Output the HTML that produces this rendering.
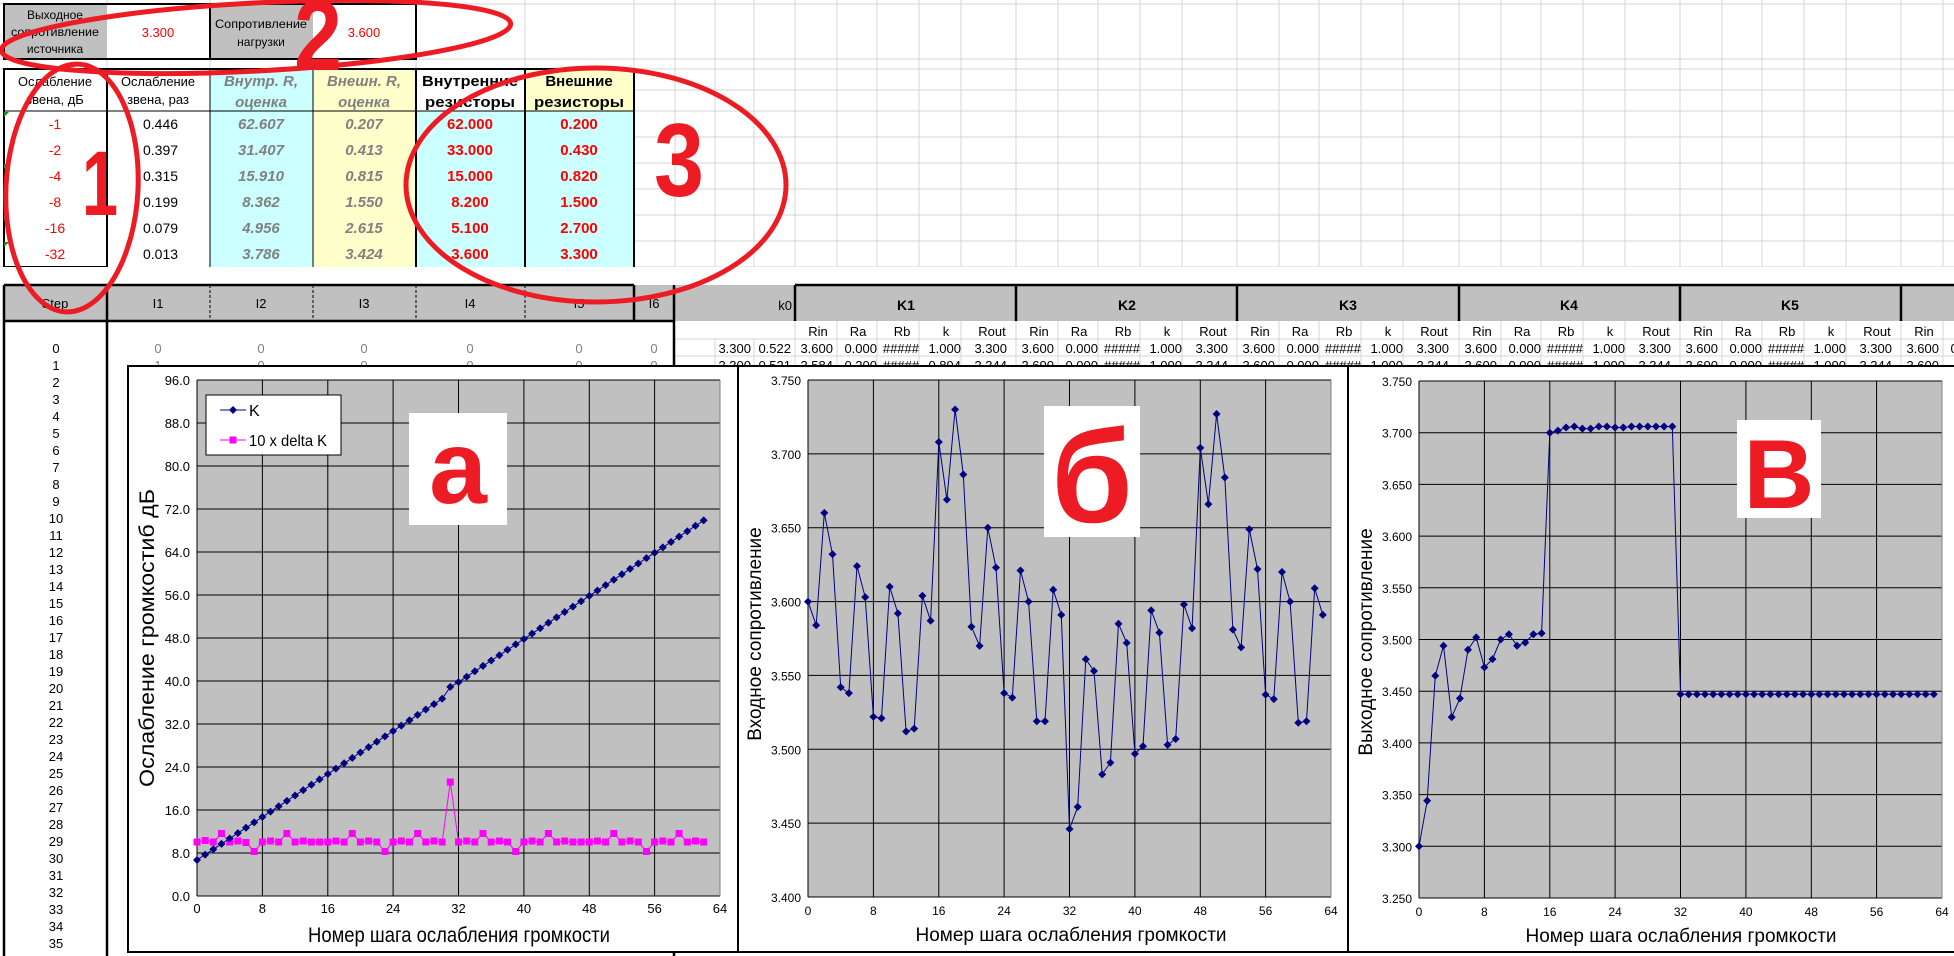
<!DOCTYPE html>
<html><head><meta charset="utf-8">
<style>
html,body{margin:0;padding:0;background:#fff;}
svg{display:block;}
text{font-family:"Liberation Sans Narrow","Liberation Sans","DejaVu Sans",sans-serif;}
.s{font-size:13px;}
.w{font-family:"Liberation Sans","DejaVu Sans",sans-serif;}
</style></head><body>
<svg width="1954" height="956" viewBox="0 0 1954 956" xmlns="http://www.w3.org/2000/svg">
<defs>
<marker id="dm" markerWidth="9" markerHeight="9" refX="4.5" refY="4.5" markerUnits="userSpaceOnUse"><path d="M4.5 0.5L8.5 4.5L4.5 8.5L0.5 4.5Z" fill="#000080"/></marker>
<marker id="sq" markerWidth="9" markerHeight="9" refX="4.5" refY="4.5" markerUnits="userSpaceOnUse"><rect x="1" y="1" width="7" height="7" fill="#FF00FF"/></marker>
</defs>

<g stroke="#d4d4d4" stroke-width="1">
<line x1="0" y1="4" x2="1954" y2="4"/><line x1="0" y1="59" x2="1954" y2="59"/><line x1="0" y1="69" x2="1954" y2="69"/>
<line x1="634" y1="90" x2="1954" y2="90"/><line x1="634" y1="111" x2="1954" y2="111"/><line x1="634" y1="137" x2="1954" y2="137"/>
<line x1="634" y1="163" x2="1954" y2="163"/><line x1="634" y1="189" x2="1954" y2="189"/><line x1="634" y1="215" x2="1954" y2="215"/>
<line x1="634" y1="241" x2="1954" y2="241"/><line x1="0" y1="267" x2="1954" y2="267"/>
<line x1="107" y1="0" x2="107" y2="285"/><line x1="210" y1="0" x2="210" y2="285"/><line x1="313" y1="0" x2="313" y2="285"/>
<line x1="416" y1="0" x2="416" y2="285"/><line x1="525" y1="0" x2="525" y2="285"/><line x1="634" y1="0" x2="634" y2="285"/>
<line x1="675" y1="0" x2="675" y2="285"/><line x1="715" y1="0" x2="715" y2="285"/><line x1="754" y1="0" x2="754" y2="285"/>
</g>
<g stroke="#d4d4d4" stroke-width="1">
<line x1="795" y1="0" x2="795" y2="285"/><line x1="837" y1="0" x2="837" y2="285"/><line x1="877" y1="0" x2="877" y2="285"/><line x1="919" y1="0" x2="919" y2="285"/><line x1="961" y1="0" x2="961" y2="285"/>
<line x1="1016" y1="0" x2="1016" y2="285"/><line x1="1058" y1="0" x2="1058" y2="285"/><line x1="1098" y1="0" x2="1098" y2="285"/><line x1="1140" y1="0" x2="1140" y2="285"/><line x1="1182" y1="0" x2="1182" y2="285"/>
<line x1="1237" y1="0" x2="1237" y2="285"/><line x1="1279" y1="0" x2="1279" y2="285"/><line x1="1319" y1="0" x2="1319" y2="285"/><line x1="1361" y1="0" x2="1361" y2="285"/><line x1="1403" y1="0" x2="1403" y2="285"/>
<line x1="1459" y1="0" x2="1459" y2="285"/><line x1="1501" y1="0" x2="1501" y2="285"/><line x1="1541" y1="0" x2="1541" y2="285"/><line x1="1583" y1="0" x2="1583" y2="285"/><line x1="1625" y1="0" x2="1625" y2="285"/>
<line x1="1680" y1="0" x2="1680" y2="285"/><line x1="1722" y1="0" x2="1722" y2="285"/><line x1="1762" y1="0" x2="1762" y2="285"/><line x1="1804" y1="0" x2="1804" y2="285"/><line x1="1846" y1="0" x2="1846" y2="285"/>
<line x1="1901" y1="0" x2="1901" y2="285"/><line x1="1943" y1="0" x2="1943" y2="285"/>
</g>

<rect x="4" y="4" width="103" height="55" fill="#C0C0C0"/>
<rect x="107" y="4" width="103" height="55" fill="#fff"/>
<rect x="210" y="4" width="103" height="55" fill="#C0C0C0"/>
<rect x="313" y="4" width="103" height="55" fill="#fff"/>
<g fill="none" stroke="#000" stroke-width="2"><rect x="4" y="4" width="412" height="55"/><line x1="210" y1="4" x2="210" y2="59"/></g>
<g class="s" text-anchor="middle" font-size="12">
<text x="55" y="19" font-size="12">Выходное</text><text x="55" y="36" font-size="12" textLength="88" lengthAdjust="spacingAndGlyphs">сопротивление</text><text x="55" y="53" font-size="12">источника</text>
<text x="261" y="28" font-size="12" textLength="92" lengthAdjust="spacingAndGlyphs">Сопротивление</text><text x="261" y="46" font-size="12">нагрузки</text>
<text x="158" y="37" fill="#ff0000" font-size="13">3.300</text><text x="364" y="37" fill="#ff0000" font-size="13">3.600</text>
</g>

<rect x="4" y="69" width="630" height="198" fill="#fff"/>
<rect x="210" y="69" width="103" height="198" fill="#CCFFFF"/>
<rect x="313" y="69" width="103" height="198" fill="#FFFFCC"/>
<rect x="416" y="111" width="218" height="156" fill="#CCFFFF"/>
<rect x="525" y="69" width="109" height="42" fill="#FFFFCC"/>
<g stroke="#000" stroke-width="1" fill="none">
<line x1="4" y1="111" x2="634" y2="111"/>
<line x1="210" y1="69" x2="210" y2="267"/><line x1="313" y1="69" x2="313" y2="267"/>
</g>
<g stroke="#000" stroke-width="2" fill="none">
<line x1="4" y1="69" x2="634" y2="69"/>
<rect x="4" y="69" width="103" height="198"/>
<line x1="416" y1="69" x2="416" y2="267"/><line x1="525" y1="69" x2="525" y2="267"/><line x1="634" y1="69" x2="634" y2="267"/>
</g>
<g fill="#1a8a1a"><path d="M4 112l5 0l-5 5z"/><path d="M4 164l5 0l-5 5z"/><path d="M4 190l5 0l-5 5z"/><path d="M4 216l5 0l-5 5z"/><path d="M4 242l5 0l-5 5z"/></g>
<g class="s" text-anchor="middle" font-size="13">
<text x="55" y="86" textLength="74" lengthAdjust="spacingAndGlyphs">Ослабление</text><text x="55" y="104">звена, дБ</text>
<text x="158" y="86" textLength="74" lengthAdjust="spacingAndGlyphs">Ослабление</text><text x="158" y="104">звена, раз</text>
</g>
<g text-anchor="middle" font-size="15" font-weight="bold" font-style="italic" fill="#808080">
<text x="261" y="86">Внутр. R,</text><text x="261" y="107">оценка</text>
<text x="364" y="86">Внешн. R,</text><text x="364" y="107">оценка</text>
</g>
<g text-anchor="middle" font-size="15" font-weight="bold" fill="#000">
<text x="470" y="86" textLength="96" lengthAdjust="spacingAndGlyphs">Внутренние</text><text x="470" y="107" textLength="90" lengthAdjust="spacingAndGlyphs">резисторы</text>
<text x="579" y="86">Внешние</text><text x="579" y="107" textLength="90" lengthAdjust="spacingAndGlyphs">резисторы</text>
</g>
<g text-anchor="middle" font-size="14">
<g fill="#ff0000"><text x="55" y="129">-1</text><text x="55" y="155">-2</text><text x="55" y="181">-4</text><text x="55" y="207">-8</text><text x="55" y="233">-16</text><text x="55" y="259">-32</text></g>
<g fill="#000" text-anchor="start"><text x="143" y="129">0.446</text><text x="143" y="155">0.397</text><text x="143" y="181">0.315</text><text x="143" y="207">0.199</text><text x="143" y="233">0.079</text><text x="143" y="259">0.013</text></g>
<g fill="#808080" font-weight="bold" font-style="italic" font-size="15"><text x="261" y="129">62.607</text><text x="261" y="155">31.407</text><text x="261" y="181">15.910</text><text x="261" y="207">8.362</text><text x="261" y="233">4.956</text><text x="261" y="259">3.786</text>
<text x="364" y="129">0.207</text><text x="364" y="155">0.413</text><text x="364" y="181">0.815</text><text x="364" y="207">1.550</text><text x="364" y="233">2.615</text><text x="364" y="259">3.424</text></g>
<g fill="#ff0000" font-weight="bold" font-size="15"><text x="470" y="129">62.000</text><text x="470" y="155">33.000</text><text x="470" y="181">15.000</text><text x="470" y="207">8.200</text><text x="470" y="233">5.100</text><text x="470" y="259">3.600</text>
<text x="579" y="129">0.200</text><text x="579" y="155">0.430</text><text x="579" y="181">0.820</text><text x="579" y="207">1.500</text><text x="579" y="233">2.700</text><text x="579" y="259">3.300</text></g>
</g>

<rect x="0" y="267" width="1954" height="18" fill="#fff"/>
<rect x="4" y="285" width="1950" height="36" fill="#C0C0C0"/>
<rect x="0" y="321" width="1954" height="635" fill="#fff"/>
<g stroke="#d4d4d4"><line x1="675" y1="339" x2="1954" y2="339"/><line x1="675" y1="356" x2="1954" y2="356"/>
<line x1="715" y1="339" x2="715" y2="366"/><line x1="754" y1="339" x2="754" y2="366"/>
<line x1="837" y1="321" x2="837" y2="366"/><line x1="877" y1="321" x2="877" y2="366"/><line x1="919" y1="321" x2="919" y2="366"/><line x1="961" y1="321" x2="961" y2="366"/><line x1="1016" y1="321" x2="1016" y2="366"/>
<line x1="1058" y1="321" x2="1058" y2="366"/><line x1="1098" y1="321" x2="1098" y2="366"/><line x1="1140" y1="321" x2="1140" y2="366"/><line x1="1182" y1="321" x2="1182" y2="366"/><line x1="1237" y1="321" x2="1237" y2="366"/>
<line x1="1279" y1="321" x2="1279" y2="366"/><line x1="1319" y1="321" x2="1319" y2="366"/><line x1="1361" y1="321" x2="1361" y2="366"/><line x1="1403" y1="321" x2="1403" y2="366"/><line x1="1459" y1="321" x2="1459" y2="366"/>
<line x1="1501" y1="321" x2="1501" y2="366"/><line x1="1541" y1="321" x2="1541" y2="366"/><line x1="1583" y1="321" x2="1583" y2="366"/><line x1="1625" y1="321" x2="1625" y2="366"/><line x1="1680" y1="321" x2="1680" y2="366"/>
<line x1="1722" y1="321" x2="1722" y2="366"/><line x1="1762" y1="321" x2="1762" y2="366"/><line x1="1804" y1="321" x2="1804" y2="366"/><line x1="1846" y1="321" x2="1846" y2="366"/><line x1="1901" y1="321" x2="1901" y2="366"/><line x1="1943" y1="321" x2="1943" y2="366"/>
<line x1="795" y1="321" x2="795" y2="366"/></g>
<g stroke="#000" stroke-width="1" stroke-dasharray="3,2"><line x1="210" y1="285" x2="210" y2="321"/><line x1="313" y1="285" x2="313" y2="321"/><line x1="416" y1="285" x2="416" y2="321"/><line x1="525" y1="285" x2="525" y2="321"/></g>
<g stroke="#000" stroke-width="2.5">
<line x1="4" y1="285" x2="634" y2="285"/><line x1="795" y1="285" x2="1954" y2="285"/>
<line x1="4" y1="321" x2="674" y2="321"/>
<line x1="4" y1="285" x2="4" y2="956"/><line x1="107" y1="285" x2="107" y2="956"/><line x1="634" y1="285" x2="634" y2="321"/><line x1="674" y1="285" x2="674" y2="956"/>
<line x1="795" y1="285" x2="795" y2="321"/><line x1="1016" y1="285" x2="1016" y2="321"/><line x1="1237" y1="285" x2="1237" y2="321"/><line x1="1459" y1="285" x2="1459" y2="321"/><line x1="1680" y1="285" x2="1680" y2="321"/><line x1="1901" y1="285" x2="1901" y2="321"/>
</g>
<g class="s" text-anchor="middle" font-size="14">
<text x="55" y="308">Step</text><text x="158" y="308">I1</text><text x="261" y="308">I2</text><text x="364" y="308">I3</text><text x="470" y="308">I4</text><text x="579" y="308">I5</text><text x="654" y="308">I6</text>
</g>
<g font-size="14" font-weight="bold" text-anchor="middle">
<text x="906" y="310">K1</text><text x="1127" y="310">K2</text><text x="1348" y="310">K3</text><text x="1569" y="310">K4</text><text x="1790" y="310">K5</text>
</g>
<text x="792" y="310" text-anchor="end" font-size="13">k0</text>
<g class="s" text-anchor="middle" font-size="13">
<text x="818" y="336">Rin</text><text x="858" y="336">Ra</text><text x="902" y="336">Rb</text><text x="946" y="336">k</text><text x="992" y="336">Rout</text>
<text x="1039" y="336">Rin</text><text x="1079" y="336">Ra</text><text x="1123" y="336">Rb</text><text x="1167" y="336">k</text><text x="1213" y="336">Rout</text>
<text x="1260" y="336">Rin</text><text x="1300" y="336">Ra</text><text x="1344" y="336">Rb</text><text x="1388" y="336">k</text><text x="1434" y="336">Rout</text>
<text x="1482" y="336">Rin</text><text x="1522" y="336">Ra</text><text x="1566" y="336">Rb</text><text x="1610" y="336">k</text><text x="1656" y="336">Rout</text>
<text x="1703" y="336">Rin</text><text x="1743" y="336">Ra</text><text x="1787" y="336">Rb</text><text x="1831" y="336">k</text><text x="1877" y="336">Rout</text>
<text x="1924" y="336">Rin</text>
</g>
<g class="s" text-anchor="end" font-size="13">
<text x="751" y="353">3.300</text><text x="791" y="353">0.522</text>
<text x="833" y="353">3.600</text><text x="877" y="353">0.000</text><text x="919" y="353">#####</text><text x="961" y="353">1.000</text><text x="1007" y="353">3.300</text>
<text x="1054" y="353">3.600</text><text x="1098" y="353">0.000</text><text x="1140" y="353">#####</text><text x="1182" y="353">1.000</text><text x="1228" y="353">3.300</text>
<text x="1275" y="353">3.600</text><text x="1319" y="353">0.000</text><text x="1361" y="353">#####</text><text x="1403" y="353">1.000</text><text x="1449" y="353">3.300</text>
<text x="1497" y="353">3.600</text><text x="1541" y="353">0.000</text><text x="1583" y="353">#####</text><text x="1625" y="353">1.000</text><text x="1671" y="353">3.300</text>
<text x="1718" y="353">3.600</text><text x="1762" y="353">0.000</text><text x="1804" y="353">#####</text><text x="1846" y="353">1.000</text><text x="1892" y="353">3.300</text>
<text x="1939" y="353">3.600</text><text x="1983" y="353">0.000</text>
<text x="751" y="370">3.300</text><text x="791" y="370">0.521</text>
<text x="833" y="370">3.584</text><text x="877" y="370">0.200</text><text x="919" y="370">#####</text><text x="961" y="370">0.894</text><text x="1007" y="370">3.344</text>
<text x="1054" y="370">3.600</text><text x="1098" y="370">0.000</text><text x="1140" y="370">#####</text><text x="1182" y="370">1.000</text><text x="1228" y="370">3.344</text>
<text x="1275" y="370">3.600</text><text x="1319" y="370">0.000</text><text x="1361" y="370">#####</text><text x="1403" y="370">1.000</text><text x="1449" y="370">3.344</text>
<text x="1497" y="370">3.600</text><text x="1541" y="370">0.000</text><text x="1583" y="370">#####</text><text x="1625" y="370">1.000</text><text x="1671" y="370">3.344</text>
<text x="1718" y="370">3.600</text><text x="1762" y="370">0.000</text><text x="1804" y="370">#####</text><text x="1846" y="370">1.000</text><text x="1892" y="370">3.344</text>
<text x="1939" y="370">3.600</text>
</g>
<g class="s" text-anchor="middle" font-size="14" fill="#808080">
<text x="158" y="353">0</text><text x="261" y="353">0</text><text x="364" y="353">0</text><text x="470" y="353">0</text><text x="579" y="353">0</text><text x="654" y="353">0</text>
<text x="158" y="370">1</text><text x="261" y="370">0</text><text x="364" y="370">0</text><text x="470" y="370">0</text><text x="579" y="370">0</text><text x="654" y="370">0</text>
</g>
<g class="s" text-anchor="middle" font-size="14">
<text x="56" y="353">0</text><text x="56" y="370">1</text><text x="56" y="387">2</text><text x="56" y="404">3</text><text x="56" y="421">4</text><text x="56" y="438">5</text><text x="56" y="455">6</text><text x="56" y="472">7</text><text x="56" y="489">8</text><text x="56" y="506">9</text>
<text x="56" y="523">10</text><text x="56" y="540">11</text><text x="56" y="557">12</text><text x="56" y="574">13</text><text x="56" y="591">14</text><text x="56" y="608">15</text><text x="56" y="625">16</text><text x="56" y="642">17</text><text x="56" y="659">18</text><text x="56" y="676">19</text>
<text x="56" y="693">20</text><text x="56" y="710">21</text><text x="56" y="727">22</text><text x="56" y="744">23</text><text x="56" y="761">24</text><text x="56" y="778">25</text><text x="56" y="795">26</text><text x="56" y="812">27</text><text x="56" y="829">28</text><text x="56" y="846">29</text>
<text x="56" y="863">30</text><text x="56" y="880">31</text><text x="56" y="897">32</text><text x="56" y="914">33</text><text x="56" y="931">34</text><text x="56" y="948">35</text>
</g>

<!-- Chart a -->
<rect x="128" y="366" width="610" height="586" fill="#fff" stroke="#000" stroke-width="2"/>
<rect x="197" y="380" width="523" height="516" fill="#C0C0C0"/>
<g stroke="#000" stroke-width="1">
<line x1="197" y1="380" x2="720" y2="380"/><line x1="197" y1="423" x2="720" y2="423"/><line x1="197" y1="466" x2="720" y2="466"/><line x1="197" y1="509" x2="720" y2="509"/><line x1="197" y1="552" x2="720" y2="552"/><line x1="197" y1="595" x2="720" y2="595"/><line x1="197" y1="638" x2="720" y2="638"/><line x1="197" y1="681" x2="720" y2="681"/><line x1="197" y1="724" x2="720" y2="724"/><line x1="197" y1="767" x2="720" y2="767"/><line x1="197" y1="810" x2="720" y2="810"/><line x1="197" y1="853" x2="720" y2="853"/>
<line x1="262.4" y1="380" x2="262.4" y2="896"/><line x1="327.8" y1="380" x2="327.8" y2="896"/><line x1="393.1" y1="380" x2="393.1" y2="896"/><line x1="458.5" y1="380" x2="458.5" y2="896"/><line x1="523.9" y1="380" x2="523.9" y2="896"/><line x1="589.3" y1="380" x2="589.3" y2="896"/><line x1="654.6" y1="380" x2="654.6" y2="896"/>
<line x1="197" y1="380" x2="197" y2="896"/><line x1="197" y1="896" x2="720" y2="896"/>
</g>
<g stroke="#808080"><line x1="720" y1="380" x2="720" y2="896"/></g>
<g class="s" text-anchor="end" font-size="13">
<text x="190" y="385">96.0</text><text x="190" y="428">88.0</text><text x="190" y="471">80.0</text><text x="190" y="514">72.0</text><text x="190" y="557">64.0</text><text x="190" y="600">56.0</text><text x="190" y="643">48.0</text><text x="190" y="686">40.0</text><text x="190" y="729">32.0</text><text x="190" y="772">24.0</text><text x="190" y="815">16.0</text><text x="190" y="858">8.0</text><text x="190" y="901">0.0</text>
</g>
<g class="s" text-anchor="middle" font-size="13">
<text x="197" y="913">0</text><text x="262.4" y="913">8</text><text x="327.8" y="913">16</text><text x="393.1" y="913">24</text><text x="458.5" y="913">32</text><text x="523.9" y="913">40</text><text x="589.3" y="913">48</text><text x="654.6" y="913">56</text><text x="720" y="913">64</text>
</g>
<text x="459" y="942" text-anchor="middle" font-size="21" textLength="302" lengthAdjust="spacingAndGlyphs">Номер шага ослабления громкости</text>
<text class="w" transform="translate(154,638) rotate(-90)" text-anchor="middle" font-size="21" textLength="298" lengthAdjust="spacingAndGlyphs">Ослабление громкостиб  дБ</text>
<polyline fill="none" stroke="#FF00FF" stroke-width="1" marker-start="url(#sq)" marker-mid="url(#sq)" marker-end="url(#sq)" points="197,842 205.2,840.5 213.3,842 221.5,833.5 229.7,842 237.9,841 246,842.5 254.2,851.5 262.4,842 270.5,841 278.7,842 286.9,833.5 295.1,842 303.2,841 311.4,842 319.6,842 327.8,842 335.9,841 344.1,842 352.3,833.5 360.4,842 368.6,841 376.8,842 385,851.5 393.1,842 401.3,841 409.5,842 417.6,833.5 425.8,842 434,841 442.2,842 450.3,782 458.5,842 466.7,841 474.8,842 483,833.5 491.2,842 499.4,841 507.5,842 515.7,851.5 523.9,842 532.1,841 540.2,842 548.4,833.5 556.6,842 564.7,841 572.9,842 581.1,842 589.3,842 597.4,841 605.6,842 613.8,833.5 621.9,842 630.1,841 638.3,842 646.5,851.5 654.6,842 662.8,841 671,842 679.1,833.5 687.3,842 695.5,841 703.7,842"/>
<polyline fill="none" stroke="#000080" stroke-width="1" marker-start="url(#dm)" marker-mid="url(#dm)" marker-end="url(#dm)" points="197,860 205.2,854.6 213.3,849.3 221.5,843.9 229.7,838.5 237.9,833.1 246,827.8 254.2,822.4 262.4,817 270.5,811.6 278.7,806.3 286.9,800.9 295.1,795.5 303.2,790.1 311.4,784.8 319.6,779.4 327.8,774 335.9,768.6 344.1,763.3 352.3,757.9 360.4,752.5 368.6,747.1 376.8,741.8 385,736.4 393.1,731 401.3,725.6 409.5,720.3 417.6,714.9 425.8,709.5 434,704.1 442.2,698.8 450.3,686.9 458.5,682.1 466.7,676.7 474.8,671.3 483,665.9 491.2,660.5 499.4,655.2 507.5,649.8 515.7,644.4 523.9,639 532.1,633.6 540.2,628.2 548.4,622.8 556.6,617.4 564.7,612 572.9,606.6 581.1,601.3 589.3,595.9 597.4,590.5 605.6,585.1 613.8,579.7 621.9,574.3 630.1,568.9 638.3,563.5 646.5,558.1 654.6,552.7 662.8,547.4 671,542 679.1,536.6 687.3,531.2 695.5,525.8 703.7,520.4"/>
<rect x="206" y="395" width="135" height="60" fill="#fff" stroke="#000" stroke-width="1"/>
<line x1="220" y1="410" x2="246" y2="410" stroke="#000080"/><path d="M233 406L237 410L233 414L229 410Z" fill="#000080"/>
<line x1="220" y1="440" x2="246" y2="440" stroke="#FF00FF"/><rect x="229.5" y="436.5" width="7" height="7" fill="#FF00FF"/>
<text x="249" y="416" font-size="16">K</text><text x="249" y="446" font-size="16" textLength="78" lengthAdjust="spacingAndGlyphs">10 x delta K</text>
<rect x="409" y="413" width="98" height="112" fill="#fff"/>
<text class="w" x="458" y="503" text-anchor="middle" font-size="104" font-weight="bold" fill="#ED1C24">а</text>

<!-- Chart б -->
<rect x="738" y="366" width="610" height="586" fill="#fff" stroke="#000" stroke-width="2"/>
<rect x="808" y="380" width="523" height="517" fill="#C0C0C0"/>
<g stroke="#000" stroke-width="1">
<line x1="808" y1="380" x2="1331" y2="380"/><line x1="808" y1="453.9" x2="1331" y2="453.9"/><line x1="808" y1="527.7" x2="1331" y2="527.7"/><line x1="808" y1="601.6" x2="1331" y2="601.6"/><line x1="808" y1="675.4" x2="1331" y2="675.4"/><line x1="808" y1="749.3" x2="1331" y2="749.3"/><line x1="808" y1="823.1" x2="1331" y2="823.1"/><line x1="808" y1="897" x2="1331" y2="897"/>
<line x1="873.4" y1="380" x2="873.4" y2="897"/><line x1="938.8" y1="380" x2="938.8" y2="897"/><line x1="1004.1" y1="380" x2="1004.1" y2="897"/><line x1="1069.5" y1="380" x2="1069.5" y2="897"/><line x1="1134.9" y1="380" x2="1134.9" y2="897"/><line x1="1200.3" y1="380" x2="1200.3" y2="897"/><line x1="1265.6" y1="380" x2="1265.6" y2="897"/>
<line x1="808" y1="380" x2="808" y2="897"/>
</g>
<g stroke="#808080"><line x1="1331" y1="380" x2="1331" y2="897"/></g>
<g class="w" text-anchor="end" font-size="12">
<text x="801" y="385">3.750</text><text x="801" y="458.9">3.700</text><text x="801" y="532.7">3.650</text><text x="801" y="606.6">3.600</text><text x="801" y="680.4">3.550</text><text x="801" y="754.3">3.500</text><text x="801" y="828.1">3.450</text><text x="801" y="902">3.400</text>
</g>
<g class="w" text-anchor="middle" font-size="12">
<text x="808" y="915">0</text><text x="873.4" y="915">8</text><text x="938.8" y="915">16</text><text x="1004.1" y="915">24</text><text x="1069.5" y="915">32</text><text x="1134.9" y="915">40</text><text x="1200.3" y="915">48</text><text x="1265.6" y="915">56</text><text x="1331" y="915">64</text>
</g>
<text class="w" x="1071" y="941" text-anchor="middle" font-size="19">Номер шага ослабления громкости</text>
<text class="w" transform="translate(761,634) rotate(-90)" text-anchor="middle" font-size="19">Входное сопротивление</text>
<polyline fill="none" stroke="#000080" stroke-width="1" stroke-linejoin="round" marker-start="url(#dm)" marker-mid="url(#dm)" marker-end="url(#dm)" points="808,601.6 816.2,625.2 824.3,512.9 832.5,554.3 840.7,687.2 848.9,693.1 857,566.1 865.2,597.1 873.4,716.8 881.5,718.3 889.7,586.8 897.9,613.4 906.1,731.5 914.2,728.6 922.4,595.7 930.6,620.8 938.8,442 946.9,499.6 955.1,409.5 963.3,474.5 971.4,626.7 979.6,645.9 987.8,527.7 996,567.6 1004.1,693.1 1012.3,697.6 1020.5,570.5 1028.6,601.6 1036.8,721.2 1045,721.2 1053.2,589.7 1061.3,614.9 1069.5,829 1077.7,806.9 1085.8,659.2 1094,671 1102.2,774.4 1110.4,762.6 1118.5,623.7 1126.7,642.9 1134.9,753.7 1143,746.3 1151.2,610.4 1159.4,632.6 1167.6,744.9 1175.7,739 1183.9,604.5 1192.1,628.2 1200.3,447.9 1208.4,504.1 1216.6,414 1224.8,477.5 1232.9,629.6 1241.1,647.4 1249.3,529.2 1257.5,569.1 1265.6,694.6 1273.8,699.1 1282,572 1290.1,601.6 1298.3,722.7 1306.5,721.2 1314.7,588.3 1322.8,614.9"/>
<rect x="1044" y="406" width="96" height="131" fill="#fff"/>
<text class="w" x="1092" y="522" text-anchor="middle" font-size="132" font-weight="bold" fill="#ED1C24">б</text>

<!-- Chart в -->
<rect x="1348" y="366" width="608" height="586" fill="#fff" stroke="#000" stroke-width="2"/>
<rect x="1419" y="381" width="523" height="517" fill="#C0C0C0"/>
<g stroke="#000" stroke-width="1">
<line x1="1419" y1="381" x2="1942" y2="381"/><line x1="1419" y1="432.7" x2="1942" y2="432.7"/><line x1="1419" y1="484.4" x2="1942" y2="484.4"/><line x1="1419" y1="536.1" x2="1942" y2="536.1"/><line x1="1419" y1="587.8" x2="1942" y2="587.8"/><line x1="1419" y1="639.5" x2="1942" y2="639.5"/><line x1="1419" y1="691.2" x2="1942" y2="691.2"/><line x1="1419" y1="742.9" x2="1942" y2="742.9"/><line x1="1419" y1="794.6" x2="1942" y2="794.6"/><line x1="1419" y1="846.3" x2="1942" y2="846.3"/><line x1="1419" y1="898" x2="1942" y2="898"/>
<line x1="1484.4" y1="381" x2="1484.4" y2="898"/><line x1="1549.8" y1="381" x2="1549.8" y2="898"/><line x1="1615.1" y1="381" x2="1615.1" y2="898"/><line x1="1680.5" y1="381" x2="1680.5" y2="898"/><line x1="1745.9" y1="381" x2="1745.9" y2="898"/><line x1="1811.3" y1="381" x2="1811.3" y2="898"/><line x1="1876.6" y1="381" x2="1876.6" y2="898"/>
<line x1="1419" y1="381" x2="1419" y2="898"/>
</g>
<g stroke="#808080"><line x1="1942" y1="381" x2="1942" y2="898"/></g>
<g class="w" text-anchor="end" font-size="12">
<text x="1412" y="386">3.750</text><text x="1412" y="437.7">3.700</text><text x="1412" y="489.4">3.650</text><text x="1412" y="541.1">3.600</text><text x="1412" y="592.8">3.550</text><text x="1412" y="644.5">3.500</text><text x="1412" y="696.2">3.450</text><text x="1412" y="747.9">3.400</text><text x="1412" y="799.6">3.350</text><text x="1412" y="851.3">3.300</text><text x="1412" y="903">3.250</text>
</g>
<g class="w" text-anchor="middle" font-size="12">
<text x="1419" y="916">0</text><text x="1484.4" y="916">8</text><text x="1549.8" y="916">16</text><text x="1615.1" y="916">24</text><text x="1680.5" y="916">32</text><text x="1745.9" y="916">40</text><text x="1811.3" y="916">48</text><text x="1876.6" y="916">56</text><text x="1942" y="916">64</text>
</g>
<text class="w" x="1681" y="942" text-anchor="middle" font-size="19">Номер шага ослабления громкости</text>
<text class="w" transform="translate(1372,642) rotate(-90)" text-anchor="middle" font-size="19">Выходное сопротивление</text>
<polyline fill="none" stroke="#000080" stroke-width="1" stroke-linejoin="round" marker-start="url(#dm)" marker-mid="url(#dm)" marker-end="url(#dm)" points="1419,846.3 1427.2,800.8 1435.3,675.7 1443.5,645.7 1451.7,717.1 1459.9,698.4 1468,649.8 1476.2,637.4 1484.4,667.4 1492.5,659.1 1500.7,639.5 1508.9,634.3 1517.1,645.7 1525.2,642.6 1533.4,634.3 1541.6,633.3 1549.8,432.7 1557.9,430.6 1566.1,427.5 1574.3,426.5 1582.4,428.6 1590.6,428.6 1598.8,426.5 1606.9,426.5 1615.1,427.5 1623.3,427.5 1631.5,426.5 1639.6,426.5 1647.8,426.5 1656,426.5 1664.1,426.5 1672.3,426.5 1680.5,694.3 1688.7,694.3 1696.9,694.3 1705,694.3 1713.2,694.3 1721.4,694.3 1729.6,694.3 1737.7,694.3 1745.9,694.3 1754.1,694.3 1762.2,694.3 1770.4,694.3 1778.6,694.3 1786.8,694.3 1794.9,694.3 1803.1,694.3 1811.3,694.3 1819.4,694.3 1827.6,694.3 1835.8,694.3 1844,694.3 1852.1,694.3 1860.3,694.3 1868.5,694.3 1876.6,694.3 1884.8,694.3 1893,694.3 1901.2,694.3 1909.3,694.3 1917.5,694.3 1925.7,694.3 1933.8,694.3"/>
<rect x="1737" y="420" width="84" height="98" fill="#fff"/>
<text class="w" x="1779" y="508" text-anchor="middle" font-size="98" font-weight="bold" fill="#ED1C24">В</text>

<!-- red annotations -->
<g fill="none" stroke="#ED1C24" stroke-width="5">
<ellipse cx="256" cy="37" rx="255" ry="34" transform="rotate(-3 256 37)"/>
<ellipse cx="72" cy="188" rx="66" ry="124" transform="rotate(3 72 188)"/>
<ellipse cx="596" cy="185" rx="190" ry="117"/>
</g>
<g fill="#ED1C24" font-weight="bold" text-anchor="middle">
<text x="318" y="70" font-size="100" textLength="48" lengthAdjust="spacingAndGlyphs">2</text>
<text x="100" y="215" font-size="92" textLength="36" lengthAdjust="spacingAndGlyphs">1</text>
<text x="679" y="196" font-size="104" textLength="50" lengthAdjust="spacingAndGlyphs">3</text>
</g>
</svg>
</body></html>
